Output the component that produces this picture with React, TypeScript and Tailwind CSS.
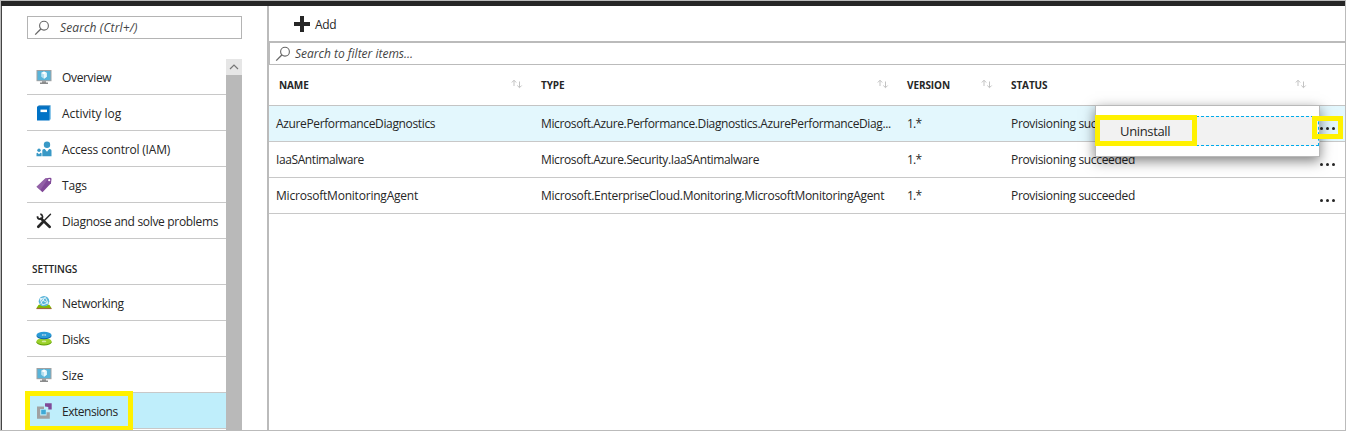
import type { ReactNode } from "react";

function MonitorIcon() {
  return (
    <svg width="16" height="16" viewBox="0 0 16 16">
      <rect x="0.5" y="1" width="15" height="11.2" fill="#a0a1a2" />
      <rect x="1.5" y="2" width="13" height="9.2" fill="#59b4d9" />
      <path d="M8 2.600l2.800 1.200v4L8 9.800 5.200 7.800v-4z" fill="#b5e0f0" />
      <path d="M8 5.300l2.800-1.300v3.800L8 9.800z" fill="#e8f7fc" />
      <path d="M8 2.600l2.800 1.300-2.800 1.400-2.800-1.400z" fill="#fff" />
      <path d="M6 12.200h4v1.300h2V15H4v-1.500h2z" fill="#8a8b8c" />
    </svg>
  );
}

function BookIcon() {
  return (
    <svg width="16" height="16" viewBox="0 0 16 16">
      <path d="M2.500 0.500H15V14.500H2.500z" fill="#8ec8ea" />
      <path d="M1 2L2.800 0.500H14.500L13.500 2z" fill="#1c74b8" />
      <rect x="1" y="1.700" width="12.600" height="13.800" fill="#0072c6" />
      <rect x="4.500" y="4.600" width="6.500" height="2.500" fill="#fff" />
    </svg>
  );
}

function PeopleIcon() {
  return (
    <svg width="16" height="16" viewBox="0 0 16 16" fill="#3999c6">
      <circle cx="11" cy="3.700" r="3.200" />
      <path d="M6.300 15.300V9.500Q6.300 8 8 8h.8L11 10.800 13.200 8h.5Q15.500 8 15.500 9.500v5.800z" />
      <circle cx="3" cy="9.300" r="1.700" />
      <path d="M.5 15.300v-2.700Q.5 11.700 1.500 11.700L3 13.200l1.500-1.500q1.100 0 1.100.9v2.700z" />
    </svg>
  );
}

function TagIcon() {
  return (
    <svg width="16" height="16" viewBox="0 0 16 16">
      <path d="M9.500 1.200L14.200.8q1.300 0 1.300 1.200l-.5 4.200L6.500 15.300 .5 9.800z" fill="#804998" />
      <path d="M9.500 1.200L12.400 1 4.300 13.300.5 9.800z" fill="#a377b5" opacity="0.5" />
      <circle cx="13.200" cy="3.200" r="1.100" fill="#fff" />
    </svg>
  );
}

function ToolsIcon() {
  return (
    <svg width="16" height="16" viewBox="0 0 16 16" fill="none" stroke="#262626">
      <path d="M5 5.500L13.800 14" strokeWidth="2.500" strokeLinecap="round" />
      <path d="M1.500 3.200Q1.300 6 4 6.200 6.800 6 6.500 3.400 6 1.400 4.300 1.200" strokeWidth="1.700" />
      <path d="M14.500 1.300L8.600 7.300" strokeWidth="1.400" strokeLinecap="round" />
      <path d="M7.200 8.800L2.300 13.800" strokeWidth="2.700" strokeLinecap="round" />
    </svg>
  );
}

function NetworkIcon() {
  return (
    <svg width="16" height="16" viewBox="0 0 16 16">
      <path d="M.5 13.500L3 9.500Q8 12 13 9.500l2.500 4z" fill="#7fba00" />
      <circle cx="8" cy="6.200" r="5.300" fill="#59b4d9" />
      <path d="M4 3.800L12 8M9.500 1.800L4.500 8.500M4 3.800L9.500 2.800 12 8 6.500 10z" stroke="#e2f4fb" strokeWidth="1" fill="none" />
      <path d="M2.500 10.300Q8 13 13.500 10.300L15.500 13.300H.5z" fill="#7fba00" />
      <rect x="0.500" y="12.900" width="15" height="1.200" fill="#a5643c" />
    </svg>
  );
}

function DisksIcon() {
  return (
    <svg width="16" height="16" viewBox="0 0 16 16">
      <ellipse cx="8" cy="11.300" rx="7.500" ry="3.200" fill="#5f9c00" />
      <ellipse cx="8" cy="10.200" rx="7.500" ry="3.200" fill="#9bd02b" />
      <ellipse cx="8" cy="10.400" rx="2.300" ry="0.900" fill="#d5eb9e" />
      <ellipse cx="8" cy="5" rx="7.500" ry="3.200" fill="#0d62a3" />
      <ellipse cx="8" cy="4" rx="7.500" ry="3.200" fill="#2b9bd6" />
      <ellipse cx="8" cy="4" rx="2.300" ry="0.900" fill="#a9dbf3" />
      <ellipse cx="8" cy="4" rx="1" ry="0.400" fill="#0d62a3" />
    </svg>
  );
}

function ExtensionsIcon() {
  return (
    <svg width="16" height="16" viewBox="0 0 16 16">
      <path d="M1 3.500H8V6H4.200v6.500h6.300V9.200h3.300V15.800H1z" fill="#a0a1a2" />
      <rect x="5.200" y="6.700" width="4.600" height="4.600" fill="#3fa9d6" />
      <path d="M9 .3H15.700V6.500H12.300V3.900L9 3.600z" fill="#804998" />
    </svg>
  );
}

function SearchIcon() {
  return (
    <svg width="16" height="16" viewBox="0 0 16 16" fill="none" stroke="#666" className="shrink-0">
      <circle cx="10" cy="5.700" r="4.400" strokeWidth="1.100" />
      <path d="M6.800 9L1.200 14.600" strokeWidth="1.300" />
    </svg>
  );
}

function SortIcon() {
  return (
    <svg width="12" height="10" viewBox="0 0 12 10" fill="none" stroke="#c3c3c3" className="shrink-0">
      <path d="M3 7V1.500M.8 3.500L3 1.200 5.200 3.500M8.500 2.500V8.500M6.300 6.500L8.500 8.700 10.700 6.500" />
    </svg>
  );
}

function NavRow({ icon, label, active, tracking }: { icon: ReactNode; label: string; active?: boolean; tracking: string }) {
  return (
    <div className={`relative flex h-9 shrink-0 items-center border-b border-[#c8c8c8] pl-[9px] ${active ? "bg-[#bfeefb]" : ""}`}>
      {icon}
      <span className={`ml-[10px] whitespace-nowrap pt-0.5 ${tracking}`}>{label}</span>
      {active && <div className="absolute -left-0.5 -top-0.5 h-[40px] w-[108px] border-[5px] border-[#fff100]" />}
    </div>
  );
}

function HeaderCell({ label, className }: { label: string; className: string }) {
  return (
    <div className={`flex shrink-0 justify-between text-[10px] font-bold leading-3 tracking-[-0.1px] ${className}`}>
      <span>{label}</span>
      <SortIcon />
    </div>
  );
}

const rows = [
  {
    name: "AzurePerformanceDiagnostics",
    nameTracking: "tracking-[-0.36px]",
    type: "Microsoft.Azure.Performance.Diagnostics.AzurePerformanceDiag...",
    typeTracking: "tracking-[-0.38px]",
    selected: true,
  },
  {
    name: "IaaSAntimalware",
    nameTracking: "tracking-[-0.4px]",
    type: "Microsoft.Azure.Security.IaaSAntimalware",
    typeTracking: "tracking-[-0.38px]",
    selected: false,
  },
  {
    name: "MicrosoftMonitoringAgent",
    nameTracking: "tracking-[-0.21px]",
    type: "Microsoft.EnterpriseCloud.Monitoring.MicrosoftMonitoringAgent",
    typeTracking: "tracking-[-0.3px]",
    selected: false,
  },
];

function ContextMenu() {
  return (
    <div className="absolute left-[826px] top-[-1px] z-10 h-[52px] w-[225px] border border-[#b9b9b9] bg-white pt-[10px] shadow-[0_4px_12px_rgba(0,0,0,0.5)]">
      <div className="relative flex h-[30px] items-center border border-dashed border-[#00abec] bg-[#f2f2f2] pl-[23px] text-[13px] tracking-[-0.35px]">
        Uninstall
        <div className="absolute -left-[2px] -top-[2px] h-[31px] w-[102px] border-[5px] border-[#fff100]" />
      </div>
    </div>
  );
}

export default function App() {
  return (
    <div className="flex h-[431px] w-[1346px] flex-col overflow-hidden border border-[#bbb] bg-white font-['Open_Sans','Noto_Sans',sans-serif] text-[12px] leading-4 text-[#262626]">
      <div className="h-[5px] shrink-0 bg-[#262626]" />
      <div className="flex min-h-0 flex-1">
        <aside className="flex w-[266px] shrink-0 flex-col border-l border-[#444] pl-[25px]">
          <div className="mt-[10px] flex h-[23px] w-[215px] shrink-0 items-center border border-[#b4b4b4] pl-[6px]">
            <SearchIcon />
            <span className="ml-[10px] italic tracking-[0.12px] text-[#444]">Search (Ctrl+/)</span>
          </div>
          <div className="mt-5 flex min-h-0 w-[215px] flex-1">
            <nav className="flex w-[199px] flex-col">
              <NavRow icon={<MonitorIcon />} label="Overview" tracking="tracking-[-0.35px]" />
              <NavRow icon={<BookIcon />} label="Activity log" tracking="tracking-[-0.06px]" />
              <NavRow icon={<PeopleIcon />} label="Access control (IAM)" tracking="tracking-[-0.2px]" />
              <NavRow icon={<TagIcon />} label="Tags" tracking="tracking-[-0.2px]" />
              <NavRow icon={<ToolsIcon />} label="Diagnose and solve problems" tracking="tracking-[-0.32px]" />
              <div className="flex h-[46px] shrink-0 items-end border-b border-[#c8c8c8] pb-[7px] pl-[5px] text-[10px] font-semibold tracking-[-0.1px]">SETTINGS</div>
              <NavRow icon={<NetworkIcon />} label="Networking" tracking="tracking-[-0.3px]" />
              <NavRow icon={<DisksIcon />} label="Disks" tracking="tracking-[-0.4px]" />
              <NavRow icon={<MonitorIcon />} label="Size" tracking="tracking-[-0.2px]" />
              <NavRow icon={<ExtensionsIcon />} label="Extensions" tracking="tracking-[-0.46px]" active />
            </nav>
            <div className="flex w-4 flex-col bg-[#b9b9b9]">
              <div className="flex h-4 items-center justify-center bg-[#e6e6e6]">
                <svg width="10" height="6" viewBox="0 0 10 6" fill="none" stroke="#777">
                  <path d="M1 5L5 1l4 4" strokeWidth="1.200" />
                </svg>
              </div>
            </div>
          </div>
        </aside>
        <main className="flex flex-1 flex-col border-l-2 border-[#bbb]">
          <div className="flex h-[37px] shrink-0 items-center border-b-2 border-[#bbb] pl-[25px]">
            <svg width="16" height="16" viewBox="0 0 16 16" fill="#262626">
              <path d="M6 0h4v6h6v4h-6v6H6v-6H0V6h6z" />
            </svg>
            <span className="ml-[5px] pt-0.5 tracking-[-0.3px]">Add</span>
          </div>
          <div className="flex h-[22px] shrink-0 items-center border-b border-l border-[#bbb] pl-[5px]">
            <SearchIcon />
            <span className="ml-1 italic text-[#444]">Search to filter items...</span>
          </div>
          <div className="flex h-[41px] shrink-0 border-b border-[#c4c4c4] pl-[10px] pt-[14px]">
            <HeaderCell label="NAME" className="mr-[18px] w-[244px]" />
            <HeaderCell label="TYPE" className="mr-[18px] w-[348px]" />
            <HeaderCell label="VERSION" className="mr-[18px] w-[86px]" />
            <HeaderCell label="STATUS" className="w-[296px]" />
          </div>
          <div className="relative">
            {rows.map((r) => (
              <div key={r.name} className={`flex h-9 items-center border-b border-[#c8c8c8] pl-[7px] ${r.selected ? "bg-[#e3f7fd]" : ""}`}>
                <span className={`w-[265px] shrink-0 pt-px ${r.nameTracking}`}>{r.name}</span>
                <span className={`w-[366px] shrink-0 whitespace-nowrap pt-px ${r.typeTracking}`}>{r.type}</span>
                <span className="w-[104px] shrink-0 pt-px tracking-[-0.8px]">1.*</span>
                <span className="w-[309px] shrink-0 pt-px tracking-[-0.33px]">Provisioning succeeded</span>
                <div className="relative mt-[9px] flex h-[3px] w-[15px] justify-between">
                  <i className="size-[3px] rounded-full bg-[#262626]" />
                  <i className="size-[3px] rounded-full bg-[#262626]" />
                  <i className="size-[3px] rounded-full bg-[#262626]" />
                  {r.selected && <div className="absolute -left-[8px] -top-[11px] z-20 h-[23px] w-[31px] border-[5px] border-[#fff100]" />}
                </div>
              </div>
            ))}
            <ContextMenu />
          </div>
        </main>
      </div>
    </div>
  );
}
